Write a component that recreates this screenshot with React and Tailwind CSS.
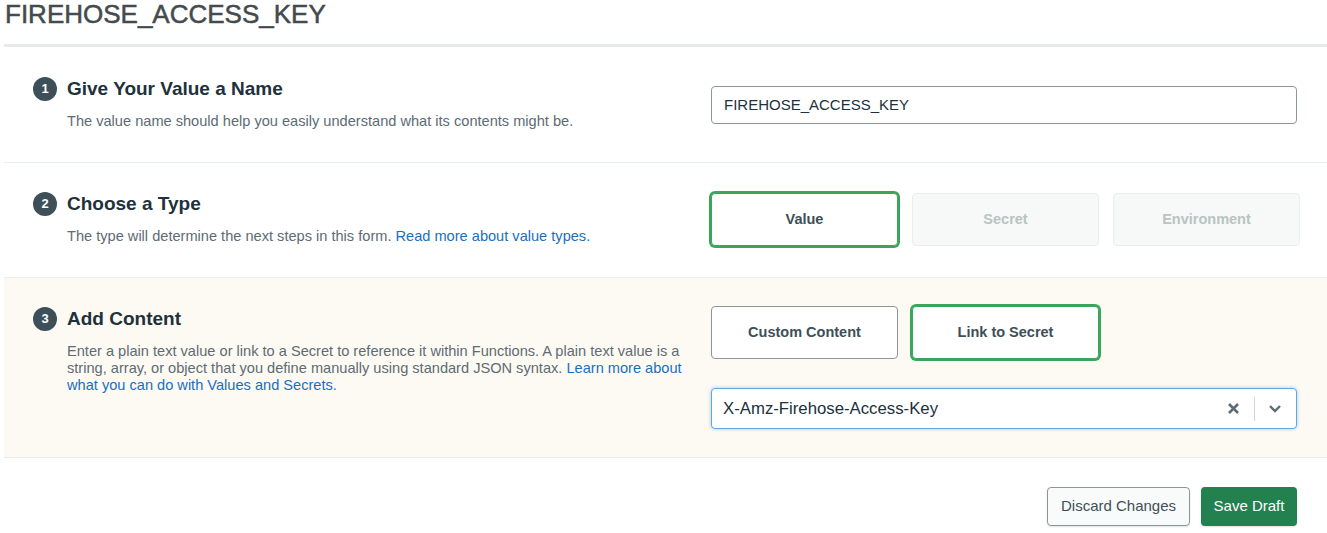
import React from "react";

const font = { fontFamily: '"Liberation Sans", Arial, sans-serif' };

function StepHeader({ n, title, children }) {
  return (
    <div className="flex-1 min-w-0">
      <div className="flex items-center h-[24px]">
        <div className="w-[24px] h-[24px] rounded-full bg-[#3d4f58] text-white text-[13px] font-bold flex items-center justify-center shrink-0">
          {n}
        </div>
        <div className="ml-[10px] text-[19px] font-bold text-[#21313c] leading-[24px]">{title}</div>
      </div>
      <div className="ml-[34px] mt-[12px] text-[14.6px] leading-[17px] text-[#5d6c74] pr-[2px]">{children}</div>
    </div>
  );
}

function OptionButton({ label, selected, disabled }) {
  let cls =
    "w-[187px] h-[53px] rounded-[4px] flex items-center justify-center text-[14.5px] font-bold shrink-0 ";
  if (selected) cls += "bg-white border border-[#3ba55c] shadow-[0_0_0_2px_#3ba55c] text-[#3d4f58]";
  else if (disabled) cls += "bg-[#f7f8f8] border border-[#e7eeec] text-[#b8c4c2]";
  else cls += "bg-white border border-[#89979b] text-[#3d4f58]";
  return <div className={cls}>{label}</div>;
}

export default function App() {
  return (
    <div className="w-[1327px] h-[533px] bg-white overflow-hidden pl-[4px]" style={font}>
      <div className="pl-[1px] text-[26px] leading-[28px] text-[#444a4e] [-webkit-text-stroke:0.5px_#444a4e]">
        FIREHOSE_ACCESS_KEY
      </div>
      <div className="mt-[16px] h-[3px] bg-[#e8e9ea]" />

      {/* Section 1 */}
      <div className="flex items-start pl-[29px] pr-[30px] pt-[30px] pb-[32px] border-b border-[#e7eeec]">
        <StepHeader n="1" title="Give Your Value a Name">
          The value name should help you easily understand what its contents might be.
        </StepHeader>
        <div className="w-[586px] ml-[20px] mt-[9px] shrink-0">
          <div className="h-[38px] rounded-[4px] border border-[#89979b] bg-white flex items-center pl-[12px] text-[15px] text-[#21313c]">
            FIREHOSE_ACCESS_KEY
          </div>
        </div>
      </div>

      {/* Section 2 */}
      <div className="flex items-start pl-[29px] pr-[30px] pt-[29px] pb-[31px] border-b border-[#e7eeec]">
        <StepHeader n="2" title="Choose a Type">
          The type will determine the next steps in this form.{" "}
          <span className="text-[#1a6fbf]">Read more about value types.</span>
        </StepHeader>
        <div className="w-[586px] ml-[20px] mt-[1px] shrink-0 flex gap-[14px]">
          <OptionButton label="Value" selected />
          <OptionButton label="Secret" disabled />
          <OptionButton label="Environment" disabled />
        </div>
      </div>

      {/* Section 3 */}
      <div className="flex items-start pl-[29px] pr-[30px] pt-[29px] pb-[28px] border-b border-[#e7eeec] bg-[#fdfaf3]">
        <StepHeader n="3" title="Add Content">
          Enter a plain text value or link to a Secret to reference it within Functions. A plain text value is a
          string, array, or object that you define manually using standard JSON syntax.{" "}
          <span className="text-[#1a6fbf]">Learn more about what you can do with Values and Secrets.</span>
        </StepHeader>
        <div className="w-[586px] ml-[20px] mt-[-1px] shrink-0">
          <div className="flex gap-[14px]">
            <OptionButton label="Custom Content" />
            <OptionButton label="Link to Secret" selected />
          </div>
          <div className="mt-[29px] h-[41px] rounded-[4px] border border-[#5ea8e8] bg-white shadow-[0_0_3px_1px_rgba(94,168,232,0.35)] flex items-center pl-[11px] pr-[14px]">
            <div className="flex-1 text-[16.75px] text-[#21313c]">X-Amz-Firehose-Access-Key</div>
            <svg width="13" height="13" viewBox="0 0 13 13" className="mr-[14px]">
              <path d="M2 2 L11 11 M11 2 L2 11" stroke="#5d6c74" strokeWidth="2.6" strokeLinecap="butt" />
            </svg>
            <div className="w-[1px] h-[24px] bg-[#d0d5d7] mr-[13px]" />
            <svg width="14" height="9" viewBox="0 0 14 9">
              <path d="M2 2 L7 7 L12 2" stroke="#5d6c74" strokeWidth="2.4" fill="none" />
            </svg>
          </div>
        </div>
      </div>

      {/* Footer */}
      <div className="flex justify-end gap-[11px] pt-[29px] pr-[30px]">
        <div className="w-[143px] h-[39px] rounded-[4px] border border-[#89979b] bg-[#f9fbfa] shadow-[0_1px_2px_rgba(0,0,0,0.12)] flex items-center justify-center text-[15px] text-[#3d4f58]">
          Discard Changes
        </div>
        <div className="w-[96px] h-[39px] rounded-[4px] bg-[#23804f] shadow-[0_1px_2px_rgba(0,0,0,0.12)] flex items-center justify-center text-[15px] text-white">
          Save Draft
        </div>
      </div>
    </div>
  );
}
